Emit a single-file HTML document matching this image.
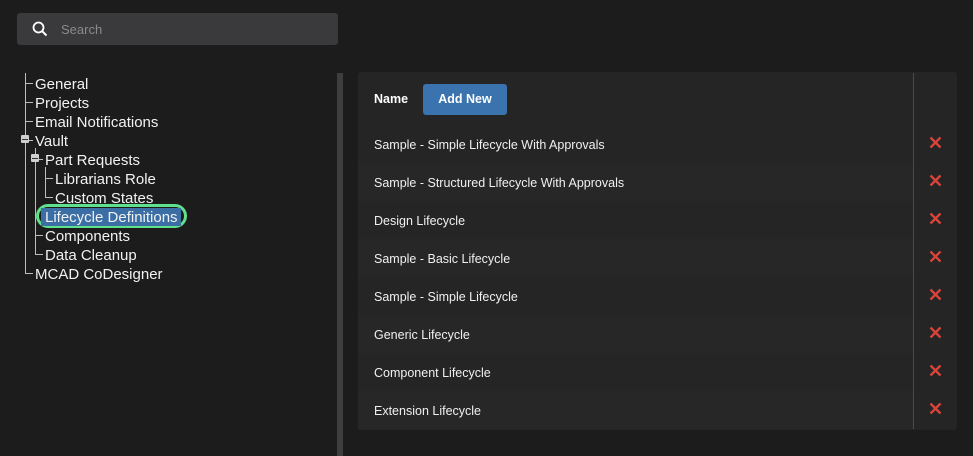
<!DOCTYPE html>
<html><head><meta charset="utf-8"><style>
*{margin:0;padding:0;box-sizing:border-box}
body{width:973px;height:456px;background:#1c1c1c;font-family:"Liberation Sans",sans-serif;position:relative;overflow:hidden;color:#fff}
.a{position:absolute}
.search{left:17px;top:13px;width:321px;height:32px;background:#3a3a3c;border-radius:3px}
.search span{position:absolute;left:44px;top:9px;font-size:13px;color:#8a8a8a}
.t{position:absolute;font-size:15px;color:#f2f2f2;line-height:19px;white-space:nowrap}
.vl{position:absolute;width:1px;background:#bdbdbd}
.hl{position:absolute;height:1px;background:#bdbdbd}
.box{position:absolute;width:8px;height:8px;background:#cfcfcf;border-radius:1px}
.box:after{content:"";position:absolute;left:1px;top:3.5px;width:6px;height:1.5px;background:#333}
.scroll{left:337px;top:73px;width:6px;height:383px;background:#3e3e3e}
.card{left:358px;top:72px;width:599px;height:358px;background:#252525;border-radius:3px}
.row{position:absolute;left:0;width:555px;height:38px;font-size:12.5px;color:#f0f0f0;line-height:40px;padding-left:16px}
.row:nth-child(even){background:#272727}
.div{left:913px;top:73px;width:1px;height:356px;background:#4a4a4a}
.x{position:absolute;left:929px;width:13px;height:13px}
</style></head><body>
<div class="a search">
<svg class="a" style="left:15px;top:8px" width="16" height="16" viewBox="0 0 16 16"><circle cx="6.5" cy="6.5" r="5" fill="none" stroke="#fff" stroke-width="1.8"/><line x1="10.2" y1="10.2" x2="14.5" y2="14.5" stroke="#fff" stroke-width="2"/></svg>
<span>Search</span></div>

<div class="vl" style="left:25px;top:73px;height:200px"></div>
<div class="hl" style="left:25px;top:83px;width:8px"></div>
<div class="hl" style="left:25px;top:102px;width:8px"></div>
<div class="hl" style="left:25px;top:121px;width:8px"></div>
<div class="hl" style="left:25px;top:140px;width:8px"></div>
<div class="hl" style="left:25px;top:273px;width:8px"></div>
<div class="vl" style="left:35px;top:148px;height:106px"></div>
<div class="hl" style="left:35px;top:159px;width:8px"></div>
<div class="hl" style="left:35px;top:235px;width:8px"></div>
<div class="hl" style="left:35px;top:254px;width:8px"></div>
<div class="vl" style="left:45px;top:167px;height:30px"></div>
<div class="hl" style="left:45px;top:178px;width:8px"></div>
<div class="hl" style="left:45px;top:197px;width:8px"></div>
<div class="box" style="left:21px;top:135px"></div>
<div class="box" style="left:31px;top:154px"></div>

<div class="t" style="left:35px;top:75px">General</div>
<div class="t" style="left:35px;top:94px">Projects</div>
<div class="t" style="left:35px;top:113px">Email Notifications</div>
<div class="t" style="left:35px;top:132px">Vault</div>
<div class="t" style="left:45px;top:151px">Part Requests</div>
<div class="t" style="left:55px;top:170px">Librarians Role</div>
<div class="t" style="left:55px;top:189px">Custom States</div>
<div class="a" style="left:36px;top:204px;width:151px;height:24px;border:3px solid #5fe08a;border-radius:12px"></div>
<div class="a" style="left:41px;top:208px;width:140px;height:18px;background:#3a6ea5"></div>
<div class="t" style="left:45px;top:208px">Lifecycle Definitions</div>
<div class="t" style="left:45px;top:227px">Components</div>
<div class="t" style="left:45px;top:246px">Data Cleanup</div>
<div class="t" style="left:35px;top:265px">MCAD CoDesigner</div>

<div class="a scroll"></div>
<div class="a card">
<div class="a" style="left:16px;top:20px;font-size:12.5px;font-weight:bold">Name</div>
<div class="a" style="left:65px;top:12px;width:84px;height:31px;background:#3a73ad;border-radius:3px;font-size:12.5px;font-weight:bold;text-align:center;line-height:31px">Add New</div>
<div class="a" style="left:0;top:53px;width:599px">
<div class="row" style="top:0">Sample - Simple Lifecycle With Approvals</div>
<div class="row" style="top:38px">Sample - Structured Lifecycle With Approvals</div>
<div class="row" style="top:76px">Design Lifecycle</div>
<div class="row" style="top:114px">Sample - Basic Lifecycle</div>
<div class="row" style="top:152px">Sample - Simple Lifecycle</div>
<div class="row" style="top:190px">Generic Lifecycle</div>
<div class="row" style="top:228px">Component Lifecycle</div>
<div class="row" style="top:266px">Extension Lifecycle</div>
</div></div>
<div class="a div"></div>
<svg class="x" style="top:136px" viewBox="0 0 13 13"><path d="M1.5 1.5L11.5 11.5M11.5 1.5L1.5 11.5" stroke="#d9443a" stroke-width="2.3"/></svg>
<svg class="x" style="top:174px" viewBox="0 0 13 13"><path d="M1.5 1.5L11.5 11.5M11.5 1.5L1.5 11.5" stroke="#d9443a" stroke-width="2.3"/></svg>
<svg class="x" style="top:212px" viewBox="0 0 13 13"><path d="M1.5 1.5L11.5 11.5M11.5 1.5L1.5 11.5" stroke="#d9443a" stroke-width="2.3"/></svg>
<svg class="x" style="top:250px" viewBox="0 0 13 13"><path d="M1.5 1.5L11.5 11.5M11.5 1.5L1.5 11.5" stroke="#d9443a" stroke-width="2.3"/></svg>
<svg class="x" style="top:288px" viewBox="0 0 13 13"><path d="M1.5 1.5L11.5 11.5M11.5 1.5L1.5 11.5" stroke="#d9443a" stroke-width="2.3"/></svg>
<svg class="x" style="top:326px" viewBox="0 0 13 13"><path d="M1.5 1.5L11.5 11.5M11.5 1.5L1.5 11.5" stroke="#d9443a" stroke-width="2.3"/></svg>
<svg class="x" style="top:364px" viewBox="0 0 13 13"><path d="M1.5 1.5L11.5 11.5M11.5 1.5L1.5 11.5" stroke="#d9443a" stroke-width="2.3"/></svg>
<svg class="x" style="top:402px" viewBox="0 0 13 13"><path d="M1.5 1.5L11.5 11.5M11.5 1.5L1.5 11.5" stroke="#d9443a" stroke-width="2.3"/></svg>
</body></html>
